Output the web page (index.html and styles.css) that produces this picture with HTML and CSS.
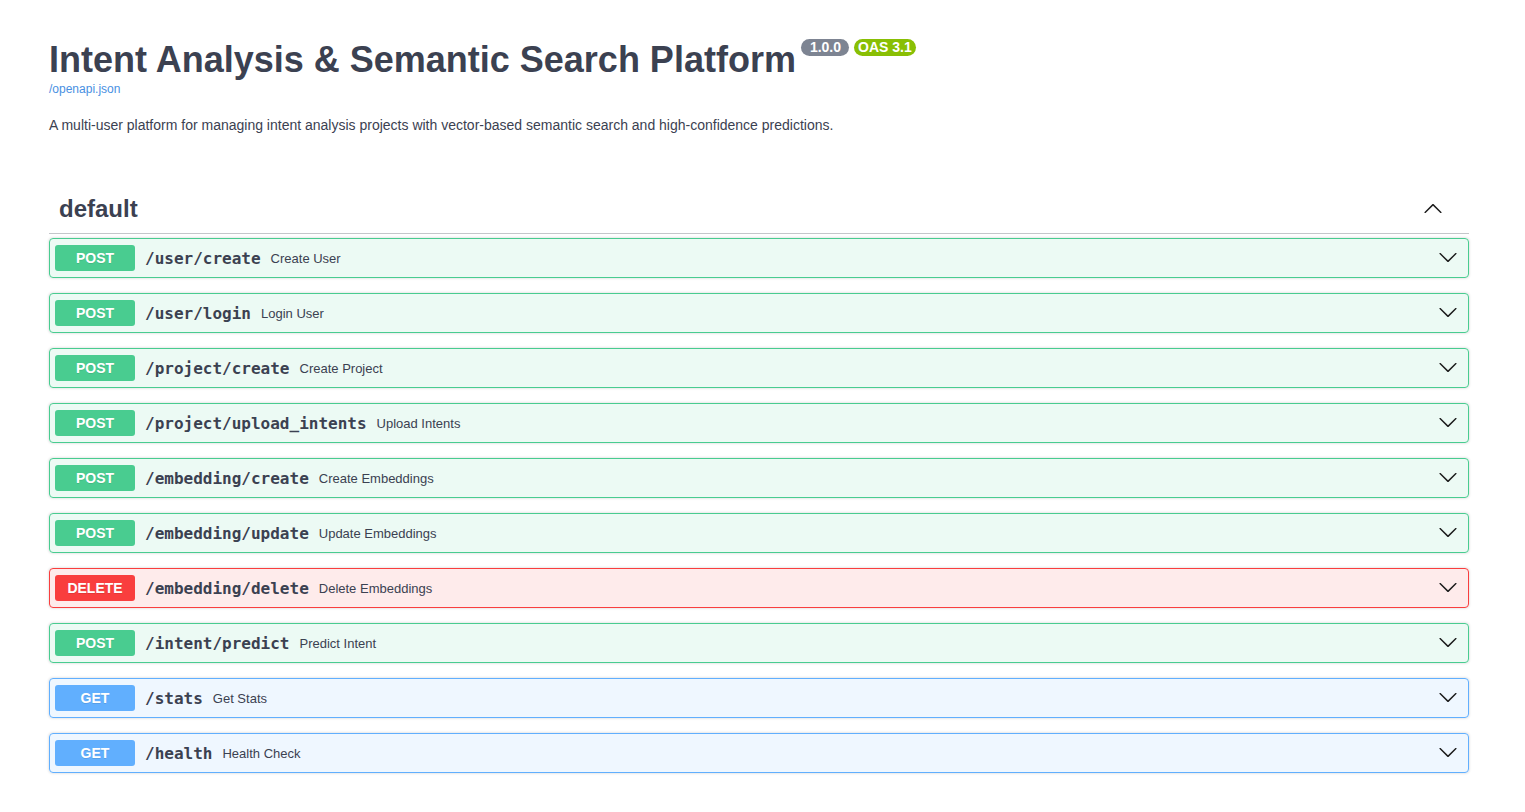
FILE: index.html
```html
<!DOCTYPE html>
<html lang="en">
<head>
<meta charset="utf-8">
<title>Intent Analysis &amp; Semantic Search Platform</title>
<link rel="stylesheet" href="styles.css">
</head>
<body>
<div class="wrapper">
  <div class="info">
    <h2 class="title">
      <span class="title-text">Intent Analysis &amp; Semantic Search Platform</span>
      <span class="badge badge-version">1.0.0</span>
      <span class="badge badge-oas">OAS 3.1</span>
    </h2>
    <a class="spec-link" href="#">/openapi.json</a>
    <p class="description">A multi-user platform for managing intent analysis projects with vector-based semantic search and high-confidence predictions.</p>
  </div>

  <section class="tag-section">
    <h3 class="tag">
      <span class="tag-name">default</span>
      <svg class="tag-arrow" viewBox="0 0 20 20" width="20" height="20"><path d="M17.418 13.891c.272.268.709.268.979 0s.271-.701 0-.969l-7.908-7.83c-.27-.268-.707-.268-.979 0l-7.908 7.83c-.27.268-.27.701 0 .969.271.268.709.268.979 0L10 6.750l7.418 7.141z"/></svg>
    </h3>

    <div class="ops">
      <div class="op op-post"><span class="method">POST</span><span class="path">/user/create</span><span class="summary">Create User</span><svg class="arrow" viewBox="0 0 20 20" width="20" height="20"><path d="M17.418 6.109c.272-.268.709-.268.979 0s.271.701 0 .969l-7.908 7.83c-.27.268-.707.268-.979 0l-7.908-7.83c-.27-.268-.27-.701 0-.969.271-.268.709-.268.979 0L10 13.25l7.418-7.141z"/></svg></div>
      <div class="op op-post"><span class="method">POST</span><span class="path">/user/login</span><span class="summary">Login User</span><svg class="arrow" viewBox="0 0 20 20" width="20" height="20"><path d="M17.418 6.109c.272-.268.709-.268.979 0s.271.701 0 .969l-7.908 7.83c-.27.268-.707.268-.979 0l-7.908-7.83c-.27-.268-.27-.701 0-.969.271-.268.709-.268.979 0L10 13.25l7.418-7.141z"/></svg></div>
      <div class="op op-post"><span class="method">POST</span><span class="path">/project/create</span><span class="summary">Create Project</span><svg class="arrow" viewBox="0 0 20 20" width="20" height="20"><path d="M17.418 6.109c.272-.268.709-.268.979 0s.271.701 0 .969l-7.908 7.83c-.27.268-.707.268-.979 0l-7.908-7.83c-.27-.268-.27-.701 0-.969.271-.268.709-.268.979 0L10 13.25l7.418-7.141z"/></svg></div>
      <div class="op op-post"><span class="method">POST</span><span class="path">/project/upload_intents</span><span class="summary">Upload Intents</span><svg class="arrow" viewBox="0 0 20 20" width="20" height="20"><path d="M17.418 6.109c.272-.268.709-.268.979 0s.271.701 0 .969l-7.908 7.83c-.27.268-.707.268-.979 0l-7.908-7.83c-.27-.268-.27-.701 0-.969.271-.268.709-.268.979 0L10 13.25l7.418-7.141z"/></svg></div>
      <div class="op op-post"><span class="method">POST</span><span class="path">/embedding/create</span><span class="summary">Create Embeddings</span><svg class="arrow" viewBox="0 0 20 20" width="20" height="20"><path d="M17.418 6.109c.272-.268.709-.268.979 0s.271.701 0 .969l-7.908 7.83c-.27.268-.707.268-.979 0l-7.908-7.83c-.27-.268-.27-.701 0-.969.271-.268.709-.268.979 0L10 13.25l7.418-7.141z"/></svg></div>
      <div class="op op-post"><span class="method">POST</span><span class="path">/embedding/update</span><span class="summary">Update Embeddings</span><svg class="arrow" viewBox="0 0 20 20" width="20" height="20"><path d="M17.418 6.109c.272-.268.709-.268.979 0s.271.701 0 .969l-7.908 7.83c-.27.268-.707.268-.979 0l-7.908-7.83c-.27-.268-.27-.701 0-.969.271-.268.709-.268.979 0L10 13.25l7.418-7.141z"/></svg></div>
      <div class="op op-delete"><span class="method">DELETE</span><span class="path">/embedding/delete</span><span class="summary">Delete Embeddings</span><svg class="arrow" viewBox="0 0 20 20" width="20" height="20"><path d="M17.418 6.109c.272-.268.709-.268.979 0s.271.701 0 .969l-7.908 7.83c-.27.268-.707.268-.979 0l-7.908-7.83c-.27-.268-.27-.701 0-.969.271-.268.709-.268.979 0L10 13.25l7.418-7.141z"/></svg></div>
      <div class="op op-post"><span class="method">POST</span><span class="path">/intent/predict</span><span class="summary">Predict Intent</span><svg class="arrow" viewBox="0 0 20 20" width="20" height="20"><path d="M17.418 6.109c.272-.268.709-.268.979 0s.271.701 0 .969l-7.908 7.83c-.27.268-.707.268-.979 0l-7.908-7.83c-.27-.268-.27-.701 0-.969.271-.268.709-.268.979 0L10 13.25l7.418-7.141z"/></svg></div>
      <div class="op op-get"><span class="method">GET</span><span class="path">/stats</span><span class="summary">Get Stats</span><svg class="arrow" viewBox="0 0 20 20" width="20" height="20"><path d="M17.418 6.109c.272-.268.709-.268.979 0s.271.701 0 .969l-7.908 7.83c-.27.268-.707.268-.979 0l-7.908-7.83c-.27-.268-.27-.701 0-.969.271-.268.709-.268.979 0L10 13.25l7.418-7.141z"/></svg></div>
      <div class="op op-get"><span class="method">GET</span><span class="path">/health</span><span class="summary">Health Check</span><svg class="arrow" viewBox="0 0 20 20" width="20" height="20"><path d="M17.418 6.109c.272-.268.709-.268.979 0s.271.701 0 .969l-7.908 7.83c-.27.268-.707.268-.979 0l-7.908-7.83c-.27-.268-.27-.701 0-.969.271-.268.709-.268.979 0L10 13.25l7.418-7.141z"/></svg></div>
    </div>
  </section>
</div>
</body>
</html>
```

FILE: styles.css
```css
html, body {
  margin: 0;
  padding: 0;
  background: #fff;
}

body {
  font-family: "Liberation Sans", Arial, Helvetica, sans-serif;
  color: #3b4151;
}

.wrapper {
  width: 1420px;
  padding: 0 56px 40px 49px;
}

.info {
  padding-top: 40px;
}

.title {
  display: flex;
  align-items: flex-start;
  margin: 0;
  font-size: 36px;
  line-height: 40px;
  font-weight: 700;
  color: #3b4151;
}

.badge {
  margin-left: 5px;
  margin-top: -1px;
  height: 17px;
  border-radius: 57px;
  font-size: 14px;
  line-height: 17px;
  font-weight: 700;
  color: #fff;
}

.badge-version {
  background: #7d8492;
  padding: 0 8px 0 9px;
}

.badge-oas {
  background: #89bf04;
  padding: 0 4px 0 4px;
}

.spec-link {
  display: block;
  margin-top: 2px;
  font-size: 12px;
  line-height: 14px;
  color: #4990e2;
  text-decoration: none;
}

.description {
  margin: 19px 0 0;
  font-size: 14px;
  line-height: 20px;
  color: #3b4151;
}

.tag-section {
  margin-top: 51px;
}

.tag {
  display: flex;
  align-items: center;
  justify-content: space-between;
  margin: 0 0 4px;
  padding: 8px 26px 10px 10px;
  height: 29px;
  border-bottom: 1px solid rgba(59, 65, 81, 0.3);
  font-size: 24px;
  font-weight: 700;
  color: #3b4151;
}

.tag-arrow {
  fill: #1b1b1b;
  width: 20px;
  height: 20px;
  margin-top: 0;
}

.ops {
  display: flex;
  flex-direction: column;
  gap: 15px;
}

.op {
  display: flex;
  align-items: center;
  height: 38px;
  padding: 0 10px 0 5px;
  border: 1px solid;
  border-radius: 4px;
  box-shadow: 0 0 3px rgba(0, 0, 0, 0.19);
}

.op-post {
  background: rgba(73, 204, 144, 0.1);
  border-color: #49cc90;
}

.op-delete {
  background: rgba(249, 62, 62, 0.1);
  border-color: #f93e3e;
}

.op-get {
  background: rgba(97, 175, 254, 0.1);
  border-color: #61affe;
}

.method {
  width: 80px;
  height: 26px;
  line-height: 26px;
  text-align: center;
  border-radius: 3px;
  font-size: 14px;
  font-weight: 700;
  color: #fff;
  text-shadow: 0 1px 0 rgba(0, 0, 0, 0.1);
}

.op-post .method { background: #49cc90; }
.op-delete .method { background: #f93e3e; }
.op-get .method { background: #61affe; }

.path {
  padding: 0 10px;
  font-family: "DejaVu Sans Mono", "Liberation Mono", monospace;
  font-size: 16px;
  font-weight: 700;
  color: #3b4151;
}

.summary {
  flex: 1;
  font-size: 13px;
  color: #3b4151;
}

.arrow {
  fill: #1b1b1b;
  width: 20px;
  height: 20px;
  margin-top: -3px;
}
```
